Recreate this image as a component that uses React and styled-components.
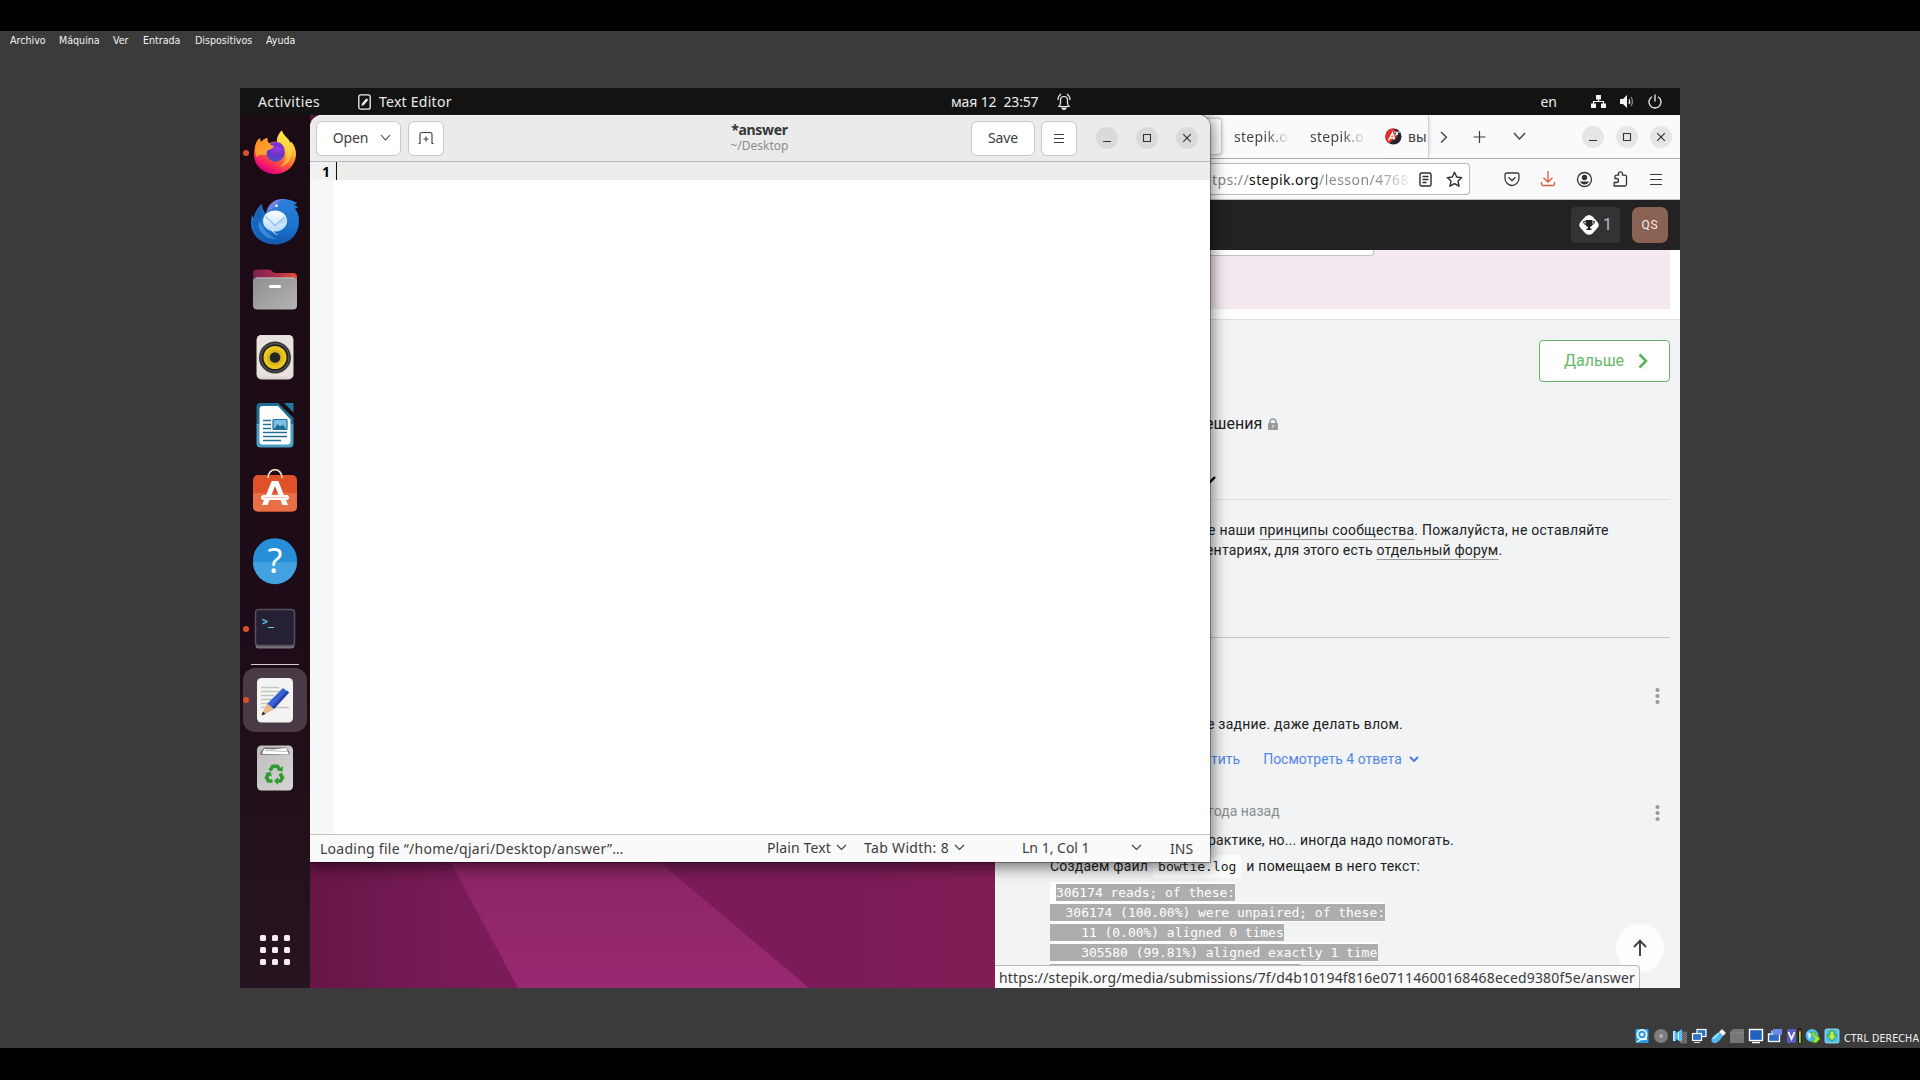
import React from "react";
import styled, { createGlobalStyle } from "styled-components";

const UI = `"Noto Sans", "Open Sans", sans-serif`;
const WEB = `Roboto, "Liberation Sans", sans-serif`;
const CODE = `"DejaVu Sans Mono", "Liberation Mono", monospace`;
const HOST = `"DejaVu Sans Condensed", "DejaVu Sans", sans-serif`;

const Global = createGlobalStyle`
  * { box-sizing: border-box; }
  body { margin: 0; background: #000; overflow: hidden; }
  svg { display: block; flex: none; }
`;

/* ---------- host machine window ---------- */

const Machine = styled.div`
  width: 1920px;
  height: 1080px;
  padding: 31px 0 32px;
  background: #000;
  font-family: ${UI};
`;
const MachineBody = styled.div`
  height: 1017px;
  background: #3a3b3a;
  display: grid;
  grid-template-rows: 18px 39px 900px 1fr;
  justify-items: center;
`;
const MenuBar = styled.nav`
  justify-self: start;
  grid-row: 1;
  padding-left: 10px;
  display: grid;
  grid-template-columns: 49px 54px 30px 52px 71px 40px;
  font: 10.6px/18px ${HOST};
  color: #f4f4f4;
`;
const Guest = styled.div`
  grid-row: 3;
  width: 1440px;
  height: 900px;
  display: grid;
  grid-template-rows: 27px 873px;
  overflow: hidden;
`;
const HostStatus = styled.div`
  grid-row: 4;
  justify-self: stretch;
  align-self: end;
  height: 24px;
  padding-right: 1px;
  display: flex;
  justify-content: flex-end;
  align-items: center;
  gap: 3px;
  font: 10.6px/20px ${HOST};
  color: #f4f4f4;
  white-space: pre;
`;
const HostLabel = styled.span`
  margin-left: 1px;
  padding-top: 3px;
  letter-spacing: 0.1px;
`;

/* ---------- top panel ---------- */

const TopBar = styled.header`
  display: grid;
  grid-template-columns: 711px 1fr auto;
  align-items: center;
  background: #131313;
  color: #ececec;
  font-size: 14px;
  line-height: 27px;
  white-space: pre;
`;
const PanelLeft = styled.div`
  display: flex;
  align-items: center;
  padding-left: 18px;
`;
const PanelClock = styled.div`
  display: flex;
  align-items: center;
  gap: 18px;
`;
const PanelRight = styled.div`
  display: flex;
  align-items: center;
  padding-right: 18px;
`;
const Label = styled.span`
  white-space: pre;
  letter-spacing: ${(p) => p.$ls || 0}px;
  margin-left: ${(p) => p.$ml || 0}px;
  font-weight: ${(p) => (p.$bold ? 700 : 400)};
`;
const Spaced = styled.span`
  display: flex;
  margin-left: ${(p) => p.$ml || 0}px;
`;

/* ---------- desktop ---------- */

const Desktop = styled.main`
  position: relative;
  display: flex;
  overflow: hidden;
  background: #6b1a4c;
`;
const Wallpaper = styled.svg`
  position: absolute;
  left: 70px;
  bottom: 0;
`;
const Dock = styled.aside`
  position: relative;
  z-index: 3;
  width: 70px;
  height: 873px;
  padding-top: 4px;
  display: flex;
  flex-direction: column;
  background: linear-gradient(#1b0b15, #1d0c17 60%, #261521);
`;
const DockSlot = styled.div`
  height: 68px;
  display: flex;
  align-items: center;
  position: relative;
`;
const DockTile = styled.div`
  width: 64px;
  height: 64px;
  margin-left: 3px;
  border-radius: 12px;
  display: grid;
  place-items: center;
  background: ${(p) => (p.$active ? "#493a45" : "transparent")};
`;
const Running = styled.i`
  position: absolute;
  left: 3px;
  top: 31px;
  width: 6px;
  height: 6px;
  border-radius: 50%;
  background: #d9512c;
`;
const DockRule = styled.div`
  width: 48px;
  height: 1px;
  margin: 1px 11px;
  background: #d5cfd3;
`;
const AppsGrid = styled.div`
  margin: auto 0 23px 20px;
  display: grid;
  grid-template-columns: repeat(3, 6px);
  gap: 6px;
`;
const AppsDot = styled.i`
  height: 6px;
  border-radius: 1.5px;
  background: #f7ecf6;
`;

/* ---------- editor window ---------- */

const Editor = styled.section`
  position: absolute;
  z-index: 2;
  left: 70px;
  top: 0;
  width: 900px;
  height: 747px;
  display: grid;
  grid-template-rows: 47px 672px 28px;
  background: #fff;
  border-radius: 12px 12px 0 0;
  box-shadow: 0 0 0 1px rgba(0, 0, 0, 0.32), 0 3px 16px 2px rgba(0, 0, 0, 0.55);
  overflow: hidden;
  color: #3d3d3d;
  font-size: 14px;
`;
const EditorHead = styled.div`
  display: grid;
  grid-template-columns: 1fr auto 1fr;
  align-items: center;
  padding: 0 12px 1px 6px;
  background: #ebebeb;
  border-top: 1px solid #fafafa;
  border-bottom: 1px solid #bdbbb9;
`;
const HeadSide = styled.div`
  display: flex;
  align-items: center;
  justify-content: ${(p) => (p.$end ? "flex-end" : "flex-start")};
`;
const HeadButton = styled.button`
  width: ${(p) => p.$w}px;
  height: 35px;
  margin: 0 ${(p) => p.$mr ?? 7}px 0 0;
  padding: 0 0 0 ${(p) => p.$pl || 0}px;
  border: 1px solid #cbc8c5;
  border-radius: 6px;
  background: #fff;
  color: #3d3d3d;
  font: 14px/20px ${UI};
  display: flex;
  align-items: center;
  justify-content: center;
  gap: 12px;
`;
const Title = styled.div`
  display: flex;
  flex-direction: column;
  align-items: center;
  padding-left: 5px;
`;
const TitleName = styled.span`
  font: 700 14px/16px ${UI};
  letter-spacing: -0.3px;
  color: #363636;
`;
const TitlePath = styled.span`
  font: 12px/16px ${UI};
  color: #8d8d8d;
`;
const Round = styled.span`
  width: 22px;
  height: 22px;
  border-radius: 50%;
  margin-left: ${(p) => p.$gap}px;
  display: grid;
  place-items: center;
  flex: none;
  background: ${(p) => p.$bg};
`;
const TextArea = styled.div`
  display: grid;
  grid-template-columns: 24px 1fr;
  grid-template-rows: 18px 1fr;
`;
const LineNo = styled.div`
  background: #f1f1f1;
  color: #000;
  font: 700 14px/20px "Noto Sans", sans-serif;
  text-align: right;
  padding-right: 4px;
`;
const CurrentLine = styled.div`
  background: #ededec;
  padding-left: 2px;
`;
const Caret = styled.i`
  display: block;
  width: 1px;
  height: 18px;
  background: #111;
`;
const Gutter = styled.div`
  background: #f7f7f7;
`;
const EditorFoot = styled.footer`
  display: grid;
  grid-template-columns: 447px 97px 158px 148px 1fr;
  align-items: center;
  padding: 0 0 1px 10px;
  background: #fafafa;
  border-top: 1px solid #c3c0bd;
  line-height: 24px;
`;
const FootItem = styled.div`
  display: flex;
  align-items: center;
  gap: ${(p) => p.$gap || 5}px;
  padding-top: ${(p) => p.$down || 0}px;
`;

/* ---------- browser window ---------- */

const Browser = styled.section`
  position: absolute;
  z-index: 1;
  left: 755px;
  top: 0;
  width: 685px;
  height: 873px;
  display: grid;
  grid-template-columns: 685px;
  grid-template-rows: 44px 41px 50px 70px 668px;
  background: #fafafa;
  color: #404040;
`;
const TabBar = styled.div`
  display: flex;
  align-items: center;
  border-bottom: 1px solid #aaa8a6;
  font-size: 14px;
`;
const ActiveTab = styled.div`
  flex: none;
  width: 227px;
  height: 37px;
  border: 1px solid #d0d0d0;
  border-left: 0;
  border-radius: 0 4px 4px 0;
  background: #fdfdfd;
  box-shadow: 0 0 3px rgba(0, 0, 0, 0.25);
`;
const Tab = styled.div`
  flex: none;
  width: 76px;
  padding-left: 12px;
  line-height: 43px;
  letter-spacing: 0.3px;
  color: transparent;
  background: linear-gradient(90deg, #404040 44px, rgba(64, 64, 64, 0) 68px);
  background-clip: text;
  -webkit-background-clip: text;
`;
const LastTab = styled.div`
  flex: none;
  width: 55px;
  height: 43px;
  margin-right: 11px;
  padding-left: 11px;
  display: flex;
  align-items: center;
  gap: 6px;
  border-right: 1px solid #d2d2d2;
  overflow: hidden;
  box-shadow: 3px 0 4px -3px rgba(0, 0, 0, 0.2);
`;
const NavBar = styled.div`
  display: flex;
  align-items: center;
  border-bottom: 1px solid #c7c5c3;
  font-size: 14px;
`;
const UrlBox = styled.div`
  width: 475px;
  height: 32px;
  padding: 0 6px 0 217px;
  display: flex;
  align-items: center;
  border: 1px solid #bab8b5;
  border-left: 0;
  border-radius: 0 4px 4px 0;
  background: #fff;
  color: #858585;
`;
const Domain = styled.b`
  font-weight: 400;
  color: #101010;
  letter-spacing: 0.42px;
`;
const UrlTail = styled.span`
  width: 92px;
  letter-spacing: 0.46px;
  color: transparent;
  background: linear-gradient(90deg, #858585 56px, rgba(133, 133, 133, 0.1) 92px);
  background-clip: text;
  -webkit-background-clip: text;
`;
const NavIcons = styled.div`
  display: flex;
  align-items: center;
  gap: 18px;
  padding-left: 33px;
`;
const SiteHead = styled.div`
  display: flex;
  justify-content: flex-end;
  align-items: center;
  gap: 12px;
  padding-right: 12px;
  background: #222;
`;
const Score = styled.div`
  width: 49px;
  height: 36px;
  border-radius: 4px;
  background: #333;
  display: flex;
  align-items: center;
  gap: 3px;
  padding-left: 7px;
  color: #b9bcc4;
  font: 16px/36px ${WEB};
`;
const Avatar = styled.div`
  width: 36px;
  height: 36px;
  border-radius: 7px;
  background: #896254;
  color: #f4ece9;
  font: 12px/36px ${WEB};
  letter-spacing: 0.8px;
  text-align: center;
`;
const Feedback = styled.div`
  background: #fff;
  padding: 0 10px 11px 0;
  border-bottom: 1px solid #dcdee0;
`;
const PinkPanel = styled.div`
  height: 59px;
  background: #f4e9f0;
`;
const FeedbackBox = styled.div`
  width: 379px;
  height: 6px;
  background: #fff;
  border: solid #bfbfbf;
  border-width: 0 1px 1px 0;
  border-radius: 0 0 4px 0;
`;
const Content = styled.div`
  padding: 20px 10px 0 55px;
  background: #f1f3f5;
  font: 14px/24px ${WEB};
  color: #222;
  overflow: hidden;
`;
const NextButton = styled.button`
  display: flex;
  align-items: center;
  gap: 14px;
  width: 131px;
  height: 42px;
  margin: 0 0 0 auto;
  padding: 0 0 1px 24px;
  border: 1px solid #66b366;
  border-radius: 4px;
  background: #fff;
  color: #66b966;
  font: 16px/24px ${WEB};
`;
const Row = styled.div`
  display: flex;
  align-items: center;
  white-space: pre;
  height: ${(p) => p.$h || 24}px;
  margin-top: ${(p) => p.$mt || 0}px;
  padding-left: ${(p) => p.$pl || 0}px;
  color: ${(p) => p.$color || "inherit"};
  font-size: ${(p) => p.$size || 14}px;
  letter-spacing: ${(p) => p.$ls || 0}px;
`;
const Meta = styled.span`
  padding-bottom: 5px;
`;
const Rule = styled.hr`
  height: 1px;
  border: 0;
  margin: ${(p) => p.$mt}px 0 0;
  background: ${(p) => p.$c};
`;
const A = styled.a`
  text-decoration: underline #9b9b9b 1px;
  text-underline-offset: 4px;
`;
const Kebab = styled.svg`
  margin-left: auto;
  margin-right: 10px;
`;
const InlineCode = styled.code`
  height: 23px;
  margin: 0 5px;
  padding: 0 5px;
  border-radius: 3px;
  background: #fcfdfd;
  color: #1c1c1c;
  font: 13px/24px ${CODE};
  letter-spacing: 0;
`;
const CodeBlock = styled.div`
  padding-top: 4px;
`;
const CodeLine = styled.div`
  height: 20px;
  display: flex;
`;
const CodeWrap = styled.code`
  height: 20px;
  background: #fcfdfd;
  padding: 2px 0 1px ${(p) => (p.$first ? 6 : 0)}px;
`;
const Selected = styled.span`
  display: block;
  height: 17px;
  min-width: ${(p) => p.$w || 0}px;
  background: #adadad;
  color: #fff;
  white-space: pre;
  font: 13px/17px ${CODE};
  letter-spacing: -0.037px;
`;
const ScrollTop = styled.button`
  position: absolute;
  right: 16px;
  bottom: 16px;
  width: 48px;
  height: 48px;
  border: 0;
  padding: 0;
  border-radius: 50%;
  background: #fdfdfd;
  display: grid;
  place-items: center;
`;
const LinkStatus = styled.div`
  position: absolute;
  left: 0;
  bottom: 0;
  height: 23px;
  width: 645px;
  padding-left: 4px;
  border: solid #bcbab8;
  border-width: 1px 1px 0 0;
  border-radius: 0 4px 0 0;
  background: #f9f9fa;
  color: #3a3a3a;
  font: 14px/23px ${UI};
  letter-spacing: 0.172px;
  white-space: pre;
`;

/* ---------- icons ---------- */

const Chev = ({ w = 10, c = "#3d3d3d", s = 1.1, d = 5 }) => (
  <svg width={w + 2} height={d + 3} viewBox={`-1 -1 ${w + 2} ${d + 3}`} fill="none" stroke={c} strokeWidth={s}>
    <path d={`M0 0L${w / 2} ${d}L${w} 0`} />
  </svg>
);
const Minimize = () => (
  <svg width="10" height="10" stroke="#333" strokeWidth="1"><path d="M1 8.500h8" /></svg>
);
const Maximize = () => (
  <svg width="10" height="10" fill="none" stroke="#333" strokeWidth="1.100"><path d="M1.500 1.500h7v7h-7z" /></svg>
);
const Close = () => (
  <svg width="10" height="10" stroke="#333" strokeWidth="1.200"><path d="M1.200 1.200l7.600 7.600M8.800 1.200l-7.600 7.600" /></svg>
);
const Burger = ({ w = 12, g = 4 }) => (
  <svg width={w} height={g * 2 + 1} stroke="#3a3a3a" strokeWidth="1">
    <path d={`M0 .5h${w}M0 ${0.5 + g}h${w}M0 ${0.5 + 2 * g}h${w}`} />
  </svg>
);

const Firefox = () => (
  <svg width="48" height="48" viewBox="0 0 48 48">
    <defs>
      <linearGradient id="ffa" x1=".8" y1=".05" x2=".3" y2="1">
        <stop offset="0" stopColor="#fff44f" /><stop offset=".35" stopColor="#ffb02e" />
        <stop offset=".62" stopColor="#ff5a36" /><stop offset=".85" stopColor="#f5156c" /><stop offset="1" stopColor="#c60084" />
      </linearGradient>
      <radialGradient id="ffb" cx=".6" cy=".2" r=".8">
        <stop offset="0" stopColor="#a03bf0" /><stop offset=".6" stopColor="#6a35c4" /><stop offset="1" stopColor="#4b4fc9" />
      </radialGradient>
      <linearGradient id="ffc" x1="0" y1="0" x2="1" y2="1">
        <stop offset="0" stopColor="#ff8a1c" /><stop offset="1" stopColor="#ffb13b" />
      </linearGradient>
    </defs>
    <path fill="url(#ffa)" d="M4.500 16C5.500 12.500 7 10.500 9 9c0 2 .4 3 1 4 2.200-2 4.400-3.500 6.300-4.200-.3 2.200.2 4 1.700 5.700 2.600-1.500 5.600-2 8-1.500-.4-4.500 2-8.700 4.800-11.500 1 3.500 3.600 5.600 6.200 8.500 1.200 1.300 1.700 2.600 2 4 .8-.3 1-.8 1-1.500C43.500 16 45 20.500 45 25c0 11-9.300 20-21 20S3 36.500 3 25.500c0-3.500.4-6.500 1.500-9.500z" />
    <path fill="#ffe34a" opacity=".55" d="M30.800 1.500c1 3.500 3.600 5.600 6.200 8.500 5 6 6 14 1 22-3 4-7 6-10 6.500 6-4 8-10 6.500-16-1-4.500-4.500-8-8.500-9.500-.4-4.500 2-8.700 4.800-11.500z" />
    <circle cx="24.500" cy="23.500" r="9.200" fill="url(#ffb)" />
    <path fill="#7c34cf" d="M18 15.500c3-3 9-3.500 12.500-.5 2 1.500 3 3.500 3 6-4-4-8-3.500-11-3z" />
    <path fill="url(#ffc)" d="M4.500 16C5.500 12.500 7 10.500 9 9c0 2 .4 3 1 4 2.200-2 4.400-3.500 6.300-4.200-.3 2.200.2 4 1.700 5.700 1 1.200 2.500 2 5 2.500-.5 2-3 3-5.500 4-2 1-2.500 2.500-2 5-4-1-7-1-10 2C4 24 4 20 4.500 16z" />
  </svg>
);
const Thunderbird = () => (
  <svg width="48" height="48" viewBox="0 0 48 48">
    <defs>
      <linearGradient id="tba" x1=".5" y1="0" x2=".5" y2="1">
        <stop offset="0" stopColor="#2c7fd9" /><stop offset=".6" stopColor="#1a74cf" /><stop offset="1" stopColor="#1558ab" />
      </linearGradient>
      <linearGradient id="tbb" x1="0" y1="0" x2="0" y2="1">
        <stop offset="0" stopColor="#fff" /><stop offset="1" stopColor="#b5dcfb" />
      </linearGradient>
    </defs>
    <path fill="url(#tba)" d="M14 17L17 11C20 5 26 2 33 2c5 .2 9 2 13 4-.8 1-2 1.500-3.500 1.500L47 10c-1 1-2 1.500-3.500 1.500C47 15 48 19 48 24c0 14-10 23.500-24 23.500C10 47.500 0 38 0 26c0-3 .5-6 1-8l1.500 3C4 15 7 10 11 7c0 4 1 6 2.500 8z" />
    <path fill="#1660b4" opacity=".8" d="M1.500 22l1 2C4 16 7 11 10.500 9c0 4 1 6 2.500 8-5 5-5 13 1 19 3 4 8 6 13 6-8 4-19 0-23-8-1.500-4-3-8-2.500-12z" />
    <path fill="#4ea2ee" opacity=".6" d="M8 24c-3 9 6 19 18 18-4-1-7-3-9-6-4-3-6-7-9-12z" />
    <path fill="#6f7fe2" d="M16 15c0-5 4-9.500 9-12 3-1 8-1 10-.5-5 .5-7.500 2-9 4.500-1 3-5 5.500-10 8z" />
    <ellipse cx="24" cy="24" rx="12" ry="10.500" fill="url(#tbb)" />
    <path fill="#cfe0fc" d="M19 31c2 4 4 6.500 9 7-5-2-6-4-6-7z" />
    <path d="M14.500 19.500L24 28.500l9.500-8.500" fill="none" stroke="#9cc5ec" strokeWidth="1.500" />
    <path d="M24.500 28L34 19.500l1.500 6z" fill="#9cd0f7" opacity=".5" />
    <circle cx="25.500" cy="8.800" r="1.400" fill="#e6f2ff" />
  </svg>
);
const Files = () => (
  <svg width="48" height="48" viewBox="0 0 48 48">
    <defs>
      <linearGradient id="fia"><stop offset="0" stopColor="#7a2152" /><stop offset=".6" stopColor="#b5314a" /><stop offset="1" stopColor="#e8532c" /></linearGradient>
      <linearGradient id="fib" x1="0" y1="0" x2="1" y2="1"><stop offset="0" stopColor="#8e8e8e" /><stop offset="1" stopColor="#b4b4b4" /></linearGradient>
    </defs>
    <path fill="url(#fia)" d="M2 9q0-4.500 4-4.500h12q1.500 0 2.500 1l1.500 1.500q1 1 2.500 1H42q4 0 4 3.500V20H2z" />
    <rect x="2" y="12.500" width="44" height="32" rx="4" fill="url(#fib)" />
    <path d="M5 13h38" stroke="#bdbdbd" />
    <rect x="18" y="20" width="12" height="3" rx="1.200" fill="#fff" />
  </svg>
);
const Rhythmbox = () => (
  <svg width="48" height="48" viewBox="0 0 48 48">
    <rect x="5.500" y="2" width="37" height="44.500" rx="5" fill="#ddd6d2" />
    <rect x="6" y="2" width="36" height="42" rx="4.500" fill="#e8e2de" />
    <circle cx="24" cy="24.500" r="16" fill="#353535" /><circle cx="24" cy="24.500" r="14.500" fill="#555" />
    <circle cx="24" cy="24.500" r="13.300" fill="#222" /><circle cx="24" cy="24.500" r="11.500" fill="#e9c91f" />
    <circle cx="24" cy="24.500" r="8" fill="#d8b91b" /><circle cx="24" cy="24.500" r="5.300" fill="#262626" />
  </svg>
);
const Writer = () => (
  <svg width="48" height="48" viewBox="0 0 48 48">
    <path fill="#1d6f92" d="M9 2h18l15.500 15V24H5.500V6Q5.500 2 9 2z" />
    <path fill="#4a9fc4" d="M5.500 23h37v19.500q0 4-4 4h-29q-4 0-4-4z" />
    <path fill="#fff" d="M11.500 5H27l12.500 13.500V40.500q0 3-3 3h-25q-3 0-3-3V8q0-3 3-3z" />
    <path fill="#1e7ba3" d="M33 2h9.500v9.500z" />
    <path d="M12 19.500h8M12 23.500h8M12 27.500h8M12 31.500h24M12 35.500h24M12 39.500h18" stroke="#236f95" strokeWidth="1.600" />
    <rect x="22" y="18.500" width="14" height="10" rx="1" fill="#7cc3e3" stroke="#1e6f96" strokeWidth="1.200" />
    <path d="M23 28l3.500-5 2.500 2.500 3-2 3 4.500z" fill="#1e6f96" />
  </svg>
);
const Software = () => (
  <svg width="48" height="48" viewBox="0 2 48 48">
    <rect x="2" y="8" width="44" height="36.500" rx="5" fill="#e0512a" />
    <path d="M2 26h44v13.500q0 5-5 5H7q-5 0-5-5z" fill="#e86e46" />
    <path d="M17 11c0-11 14-11 14 0" fill="none" stroke="#f6dfc9" strokeWidth="1.700" />
    <path fill="#fff" d="M20.700 14h6.600L37 38h-5.500L24 19l-7.500 19H11z" />
    <rect x="10" y="28" width="28" height="5" rx="2.500" fill="#fff" />
    <path d="M12.500 30.500h23" stroke="#f3c6b6" />
  </svg>
);
const HelpText = styled.text`
  font: 34px "Noto Sans", sans-serif;
  fill: #fff;
`;
const Help = () => (
  <svg width="48" height="48" viewBox="0 .8 48 48">
    <circle cx="24" cy="24" r="22" fill="#268fd8" />
    <path d="M2 26h44a22 22 0 0 1-44 0z" fill="#42a2e0" />
    <HelpText x="24" y="37" textAnchor="middle">?</HelpText>
  </svg>
);
const TerminalText = styled.text`
  font: 700 10px "DejaVu Sans Mono", monospace;
  fill: #5fc7df;
`;
const Terminal = () => (
  <svg width="48" height="48" viewBox="0 0 48 48">
    <path d="M4.500 36h39v4.500q0 3-3 3h-33q-3 0-3-3z" fill="#77707c" />
    <rect x="4.500" y="4.500" width="39" height="36" rx="3" fill="#252033" stroke="#58505f" strokeWidth="1.500" />
    <TerminalText x="11" y="19.500">&gt;_</TerminalText>
  </svg>
);
const EditorIcon = () => (
  <svg width="48" height="48" viewBox="0 0 48 48">
    <rect x="6" y="2" width="36" height="44.500" rx="4.500" fill="#f3f3f2" />
    <path d="M10 11.500h18M10 15.500h26M10 19.500h13M10 23.500h15M10 27.500h10M10 31.500h28" stroke="#c5c5bf" strokeWidth="1.700" />
    <path d="M32 12l6 4.500-15 16.500-7-5z" fill="#3b63d6" />
    <path d="M36 14.800l2 1.700-15 16.500-2.500-1.800z" fill="#2546a8" />
    <path d="M16 27.500l7 5.500-8 4.500-4.500 2z" fill="#e6b98c" />
    <path d="M12 35.500l2.500 2.500-4 1.500z" fill="#222" />
  </svg>
);
const Trash = () => (
  <svg width="48" height="48" viewBox="0 0 48 48">
    <defs><linearGradient id="tra" x1="0" y1="0" x2="1" y2="1"><stop offset="0" stopColor="#bdbdbd" /><stop offset="1" stopColor="#d6d6d6" /></linearGradient></defs>
    <rect x="6" y="1.500" width="36" height="45" rx="4.500" fill="url(#tra)" />
    <path d="M9.500 8L13 3.500h22L38.500 8v3h-29z" fill="#777" />
    <path d="M11 10l2-5 9 .5 13-1.500 3 6.500z" fill="#fff" />
    <path d="M14 6.500l22 1" stroke="#bbb" />
    <g fill="none" stroke="#329a32" strokeWidth="3.600">
      <path d="M19 26.500l2.800-4.300h4.600l2 3" /><path d="M29 29.500l2.500 4-2 3.500h-4.500" /><path d="M21.500 37h-4l-2-3.500 2-3.500" />
    </g>
    <path d="M26 26.500l5.500 1 .5-5.500zM27 33v8l-4-4zM14 29.500l5.500-2 1.500 5z" fill="#329a32" />
  </svg>
);

const dockItems = [
  { icon: Firefox, running: true }, { icon: Thunderbird }, { icon: Files }, { icon: Rhythmbox },
  { icon: Writer }, { icon: Software }, { icon: Help }, { icon: Terminal, running: true },
];
const DockEntry = ({ item: { icon: Icon, running, active } }) => (
  <DockSlot>
    <DockTile $active={active}><Icon /></DockTile>
    {running && <Running />}
  </DockSlot>
);

const hostIcons = [
  <><rect x="1.500" y="1" width="13" height="14" rx="1" fill="#2f9be0" /><circle cx="8" cy="6.500" r="4.600" fill="none" stroke="#e9f7ff" strokeWidth="1.800" /><circle cx="8" cy="6.500" r="1.700" fill="#fff" /><path d="M3 14l4-2.500 6-.5" stroke="#fff" strokeWidth="1.300" fill="none" /></>,
  <><circle cx="8" cy="8" r="7" fill="#7d7d7d" /><circle cx="8" cy="8" r="1.800" fill="#b5b5b5" /></>,
  <><path d="M1 3h3v10H1zM4 5l6-4v14l-6-4z" fill="#59bdf0" /><path d="M1 3h1.500v10H1zM6 4h1v8H6z" fill="#cdeeff" /><path d="M10.500 4h4v11h-6v-2h2z" fill="#666" stroke="#888" strokeDasharray="1 1" /></>,
  <><rect x="6" y="1.500" width="9" height="7" fill="#2d73c8" stroke="#fff" strokeWidth="1.200" /><rect x="1.500" y="5.500" width="9" height="7" fill="#2d73c8" stroke="#fff" strokeWidth="1.200" /><path d="M3 14.500h6" stroke="#ddd" /></>,
  <><path d="M2 14c-2-3 1-6 7-10l4 4c-4 6-8 9-11 6z" fill="#4fb9f2" /><path d="M9 4l3-3 4 4-3 3z" fill="#f4f4f4" /><path d="M3 11l6-6" stroke="#b9e8ff" strokeWidth="1.500" /></>,
  <><path d="M1 4l3-3h11v14H1z" fill="#777" /><path d="M1 5h14" stroke="#888" /></>,
  <><rect x="1.500" y="1.500" width="13" height="11" fill="#1f62c0" stroke="#fff" strokeWidth="1.400" /><path d="M4 14.500h8" stroke="#fff" strokeWidth="1.500" /></>,
  <><rect x="1.500" y="6" width="11" height="7.500" fill="#2d6ac4" stroke="#fff" strokeWidth="1.300" /><rect x="6" y="1" width="9" height="6" fill="#6b8be6" /><path d="M4 2l3 2-3 2z" fill="#8fb0ff" /></>,
  <><rect x="1" y="1" width="9" height="14" rx="1" fill="#5a5bc4" /><path d="M2.500 4l3 7 3-7" stroke="#fff" strokeWidth="1.800" fill="none" /><path d="M12 .5h3.500v15H12z" fill="#111" /><path d="M13 8h1.800v7H13z" fill="#8fdc2c" /><path d="M13 4h1.800v4H13z" fill="#e8c638" /><path d="M13 2h1.800v2H13z" fill="#d85a30" /></>,
  <><circle cx="7" cy="7.500" r="6.500" fill="#4bb7ec" /><path d="M2 4l5 2-3 6z" fill="#c4ecff" /><path d="M6 5l4-1v3l3 1 2 3-4 4-4-1 3-3z" fill="#9be83b" stroke="#4a9d12" strokeWidth=".7" /></>,
  <><rect x="1" y="1" width="14" height="14" rx="1.500" fill="#4cc0ea" stroke="#a9e6ff" strokeWidth=".8" /><path d="M6 3h4v4h3l-5 6-5-6h3z" fill="#b5f35b" stroke="#47961d" strokeWidth="1" /></>,
];

const codeLines = [
  ["306174 reads; of these:", 179],
  ["  306174 (100.00%) were unpaired; of these:", 335],
  ["    11 (0.00%) aligned 0 times", 234],
  ["    305580 (99.81%) aligned exactly 1 time", 328],
  ["", 250],
];

const KebabDots = () => (
  <Kebab width="5" height="18" fill="#9b9b9b"><circle cx="2.500" cy="3" r="2.100" /><circle cx="2.500" cy="9" r="2.100" /><circle cx="2.500" cy="15" r="2.100" /></Kebab>
);

function BrowserWindow() {
  return (
    <Browser>
      <TabBar>
        <ActiveTab />
        <Tab>stepik.o</Tab>
        <Tab>stepik.o</Tab>
        <LastTab>
          <svg width="17" height="17" viewBox="0 0 17 17"><circle cx="8.500" cy="8.500" r="8" fill="#23252f" /><path d="M9 .5A8 8 0 0 0 4 15.200L12 9z" fill="#e32f2c" /><path d="M3.500 12.500L7.500 5l2 6.500M5 10h4" stroke="#fff" strokeWidth="1.500" fill="none" /><path d="M9 4h2.500v3H9.500M12.500 7V4H15" stroke="#eee" strokeWidth="1" fill="none" /></svg>
          <Label $ls={0.2}>вы</Label>
        </LastTab>
        <svg width="8" height="14" fill="none" stroke="#3a3a3a" strokeWidth="1.300"><path d="M1 2l5.500 5.200L1 12.500" /></svg>
        <Spaced $ml={25}><svg width="13" height="13" stroke="#3a3a3a" strokeWidth="1.200"><path d="M6.500 1v12M.5 7h12" /></svg></Spaced>
        <Spaced $ml={27}><Chev w={11} d={6} s={1.3} /></Spaced>
        <Round $gap={56} $bg="#e6e6e6"><Minimize /></Round>
        <Round $gap={12} $bg="#e6e6e6"><Maximize /></Round>
        <Round $gap={12} $bg="#e6e6e6"><Close /></Round>
      </TabBar>
      <NavBar>
        <UrlBox>
          <Label $ls={0.41}>tps://</Label><Domain>stepik.org</Domain><UrlTail>/lesson/4768</UrlTail>
          <Spaced $ml={8}><svg width="13" height="15" fill="none" stroke="#2c2c2c" strokeWidth="1.400"><rect x="1" y="1" width="11" height="13" rx="1.500" /><path d="M3.500 4.500h6M3.500 7.500h6M3.500 10.500h4" /></svg></Spaced>
          <Spaced $ml={14}><svg width="17" height="17" viewBox="0 0 17 17" fill="none" stroke="#2c2c2c" strokeWidth="1.400" strokeLinejoin="round"><path d="M8.500 1.300l2.200 4.700 5 .6-3.700 3.500 1 5.100-4.500-2.500L4 15.200l1-5.100L1.300 6.600l5-.6z" /></svg></Spaced>
        </UrlBox>
        <NavIcons>
          <svg width="18" height="18" viewBox="0 0 18 18" fill="none" stroke="#3a3a3a" strokeWidth="1.300"><path d="M3.500 3h11q1.500 0 1.500 1.500V8q0 3.500-2.300 5.500-2.200 2-4.700 2t-4.700-2Q2 11.500 2 8V4.500Q2 3 3.500 3z" /><path d="M5.500 7.200L9 10.500l3.500-3.300" /></svg>
          <svg width="18" height="18" viewBox="0 0 18 18" fill="none" stroke="#dd5a3c" strokeWidth="1.300"><path d="M9 1v11M4.500 7.700L9 12l4.500-4.300M2.500 12v2q0 1.500 1.500 1.500h10q1.500 0 1.500-1.500v-2" /></svg>
          <svg width="18" height="18" viewBox="0 0 18 18"><circle cx="9.500" cy="9.500" r="7" fill="none" stroke="#333" strokeWidth="1.300" /><circle cx="9.500" cy="7.500" r="2.700" fill="#333" /><path d="M5 11.500h9q-1.500 3-4.500 3t-4.500-3z" fill="#333" /></svg>
          <svg width="18" height="18" viewBox="0 0 18 18" fill="none" stroke="#333" strokeWidth="1.300"><path d="M4 16h10q1.500 0 1.500-1.500v-8Q15.500 5.200 14.100 5.200H11.500V3.800a2 2 0 0 0-4 0v1.400H5.300Q4 5.200 4 6.500v2h1.500a1.900 1.900 0 0 1 0 4H3.200V16z" /></svg>
          <Spaced $ml={3}><Burger w={12} g={5} /></Spaced>
        </NavIcons>
      </NavBar>
      <SiteHead>
        <Score>
          <svg width="22" height="22" viewBox="0 0 22 22"><path d="M7.500 2.500Q11-.5 14.500 2.500l4.500 5q3.500 3.500 0 7l-4.500 5Q11 22 7.500 19.500L3 14.500q-3.500-3.500 0-7z" fill="#fff" /><path d="M7.500 6h7v4q0 2.500-2.500 3v1.500h1.500V16h-5v-1.500H10V13q-2.500-.5-2.500-3z" fill="#222" /><path d="M7 7.500H5.500q0 3 2.500 3M15 7.500h1.500q0 3-2.500 3" fill="none" stroke="#222" /></svg>
          1
        </Score>
        <Avatar>QS</Avatar>
      </SiteHead>
      <Feedback><PinkPanel><FeedbackBox /></PinkPanel></Feedback>
      <Content>
        <NextButton>
          Дальше
          <svg width="10" height="16" fill="none" stroke="#5cb35c" strokeWidth="2.600"><path d="M1.500 1.500L8 8l-6.500 6.500" /></svg>
        </NextButton>
        <Row $mt={30} $pl={155} $size={16}>
          ешения
          <Spaced $ml={6}><svg width="10" height="12" fill="#9a9a9a"><rect y="5" width="10" height="7" rx="1" /><path d="M2 5.500V4a3 3 0 0 1 6 0v1.500" fill="none" stroke="#9a9a9a" strokeWidth="1.500" /><path d="M5 7v2.500" stroke="#eee" strokeWidth="1.300" /></svg></Spaced>
        </Row>
        <Row $mt={32} $pl={154}><Chev w={10} d={5} s={2.4} c="#000" /></Row>
        <Rule $mt={7} $c="#dfe1e3" />
        <Row $mt={20} $h={20} $pl={158} $ls={0.24}>е наши <A>принципы сообщества</A>. Пожалуйста, не оставляйте</Row>
        <Row $h={20} $pl={156} $ls={0.2}>ентариях, для этого есть <A>отдельный форум</A>.</Row>
        <Rule $mt={77} $c="#c4c6c8" />
        <Row $mt={46}><KebabDots /></Row>
        <Row $mt={4} $pl={157} $ls={0.23}>е задние. даже делать влом.</Row>
        <Row $mt={11} $pl={161} $color="#5287e8">
          тить<Label $ml={23} $ls={-0.01}>Посмотреть 4 ответа</Label>
          <Spaced $ml={7}><Chev w={8} d={4} s={1.9} c="#4279e0" /></Spaced>
        </Row>
        <Row $mt={30} $pl={158} $color="#8a8c8e"><Meta>года назад</Meta><KebabDots /></Row>
        <Row $mt={3} $pl={158} $ls={0.158}>рактике, но... иногда надо помогать.</Row>
        <Row $mt={2} $ls={0.215}>Создаем файл<InlineCode>bowtie.log</InlineCode>и помещаем в него текст:</Row>
        <CodeBlock>
          {codeLines.map(([text, w], i) => (
            <CodeLine key={w}><CodeWrap $first={i === 0}><Selected $w={w}>{text}</Selected></CodeWrap></CodeLine>
          ))}
        </CodeBlock>
      </Content>
      <ScrollTop><svg width="16" height="18" fill="none" stroke="#3c3c3c" strokeWidth="1.900"><path d="M8 17V2M2 8l6-6.300L14 8" /></svg></ScrollTop>
      <LinkStatus>https://stepik.org/media/submissions/7f/d4b10194f816e07114600168468eced9380f5e/answer</LinkStatus>
    </Browser>
  );
}

function EditorWindow() {
  return (
    <Editor>
      <EditorHead>
        <HeadSide>
          <HeadButton $w={85} $pl={7}><Label $ls={-0.15}>Open</Label><Chev w={9} d={5} /></HeadButton>
          <HeadButton $w={36}>
            <svg width="16" height="14" fill="none" stroke="#3a3a3a" strokeWidth="1.100"><path d="M.5 12.500H2V3.500q0-2 2-2h8q2 0 2 2v9h1.500M8 5.500v5M5.500 8h5" /></svg>
          </HeadButton>
        </HeadSide>
        <Title><TitleName>*answer</TitleName><TitlePath>~/Desktop</TitlePath></Title>
        <HeadSide $end>
          <HeadButton $w={64} $mr={6}><Label $ls={-0.14}>Save</Label></HeadButton>
          <HeadButton $w={36}><Burger w={10} g={4} /></HeadButton>
          <Round $gap={12} $bg="#dadada"><Minimize /></Round>
          <Round $gap={18} $bg="#dadada"><Maximize /></Round>
          <Round $gap={18} $bg="#dadada"><Close /></Round>
        </HeadSide>
      </EditorHead>
      <TextArea>
        <LineNo>1</LineNo>
        <CurrentLine><Caret /></CurrentLine>
        <Gutter />
      </TextArea>
      <EditorFoot>
        <FootItem $down={2}><Label $ls={0.26}>Loading file “/home/qjari/Desktop/answer”…</Label></FootItem>
        <FootItem><Label $ls={0.13}>Plain Text</Label><Chev w={9} d={4.5} /></FootItem>
        <FootItem><Label $ls={0.32}>Tab Width: 8</Label><Chev w={9} d={4.5} /></FootItem>
        <FootItem $gap={41}><Label>Ln 1, Col 1</Label><Chev w={9} d={4.5} /></FootItem>
        <FootItem $down={2}>INS</FootItem>
      </EditorFoot>
    </Editor>
  );
}

export default function App() {
  return (
    <Machine>
      <Global />
      <MachineBody>
        <MenuBar>
          {["Archivo", "Máquina", "Ver", "Entrada", "Dispositivos", "Ayuda"].map((m) => <span key={m}>{m}</span>)}
        </MenuBar>
        <Guest>
          <TopBar>
            <PanelLeft>
              <Label $ls={0.367}>Activities</Label>
              <Spaced $ml={38}><svg width="13" height="16" fill="none" stroke="#f2f2f2" strokeWidth="1.300"><rect x=".8" y=".8" width="11.400" height="14.400" rx="2" /><path d="M3.500 12l.7-2.700L8.500 4.300l1.700 1.600-4.300 5z" fill="#f2f2f2" stroke="none" /></svg></Spaced>
              <Label $ml={8} $ls={0.26}>Text Editor</Label>
            </PanelLeft>
            <PanelClock>
              <Label $ls={-0.142}>мая 12  23:57</Label>
              <svg width="14" height="18" fill="none" stroke="#eee" strokeWidth="1.200"><path d="M2 13.500h10q-1.500-1.500-1.500-4V7q0-3.500-3.500-3.500T3.500 7v2.500q0 2.500-1.500 4zM1 7q0-4 3-6M13 7q0-4-3-6" /><path d="M5 15.200h4q-2 2.600-4 0z" fill="#eee" /></svg>
            </PanelClock>
            <PanelRight>
              <Label>en</Label>
              <Spaced $ml={33}><svg width="17" height="15" fill="#f2f2f2"><rect x="6" y="1" width="5" height="4.500" /><rect x="1" y="9.500" width="5" height="4.500" /><rect x="11" y="9.500" width="5" height="4.500" /><path d="M8.500 5v2.500M3.500 10V7.500h10V10" fill="none" stroke="#f2f2f2" strokeWidth="1.200" /></svg></Spaced>
              <Spaced $ml={12}><svg width="16" height="15" fill="#f2f2f2"><path d="M1 5h3l4-4v13l-4-4H1z" /><path d="M10 5q1.500 2.500 0 5" fill="none" stroke="#eee" strokeWidth="1.200" /><path d="M12 3q3 4.500 0 9" fill="none" stroke="#888" strokeWidth="1.200" /></svg></Spaced>
              <Spaced $ml={13}><svg width="14" height="15" fill="none" stroke="#f2f2f2" strokeWidth="1.300"><path d="M4 2.800a6 6 0 1 0 6 0M7 .5v7" /></svg></Spaced>
            </PanelRight>
          </TopBar>
          <Desktop>
            <Wallpaper width="685" height="140" viewBox="0 0 685 140">
              <defs>
                <linearGradient id="wa"><stop offset="0" stopColor="#681548" /><stop offset=".25" stopColor="#7b1c59" /><stop offset=".8" stopColor="#7b1c59" /><stop offset="1" stopColor="#801d55" /></linearGradient>
                <linearGradient id="wb" x1="0" y1="0" x2="0" y2="1"><stop offset="0" stopColor="#8b2464" /><stop offset="1" stopColor="#992970" /></linearGradient>
              </defs>
              <path d="M0 0h685v140H0z" fill="url(#wa)" />
              <path d="M133 0h200l166 140H208z" fill="url(#wb)" />
            </Wallpaper>
            <Dock>
              {dockItems.map((item, i) => <DockEntry key={i} item={item} />)}
              <DockRule />
              <DockEntry item={{ icon: EditorIcon, running: true, active: true }} />
              <DockEntry item={{ icon: Trash }} />
              <AppsGrid>{Array.from({ length: 9 }, (_, i) => <AppsDot key={i} />)}</AppsGrid>
            </Dock>
            <BrowserWindow />
            <EditorWindow />
          </Desktop>
        </Guest>
        <HostStatus>
          {hostIcons.map((g, i) => <svg key={i} width="16" height="16" viewBox="0 0 16 16">{g}</svg>)}
          <HostLabel>CTRL DERECHA</HostLabel>
        </HostStatus>
      </MachineBody>
    </Machine>
  );
}
